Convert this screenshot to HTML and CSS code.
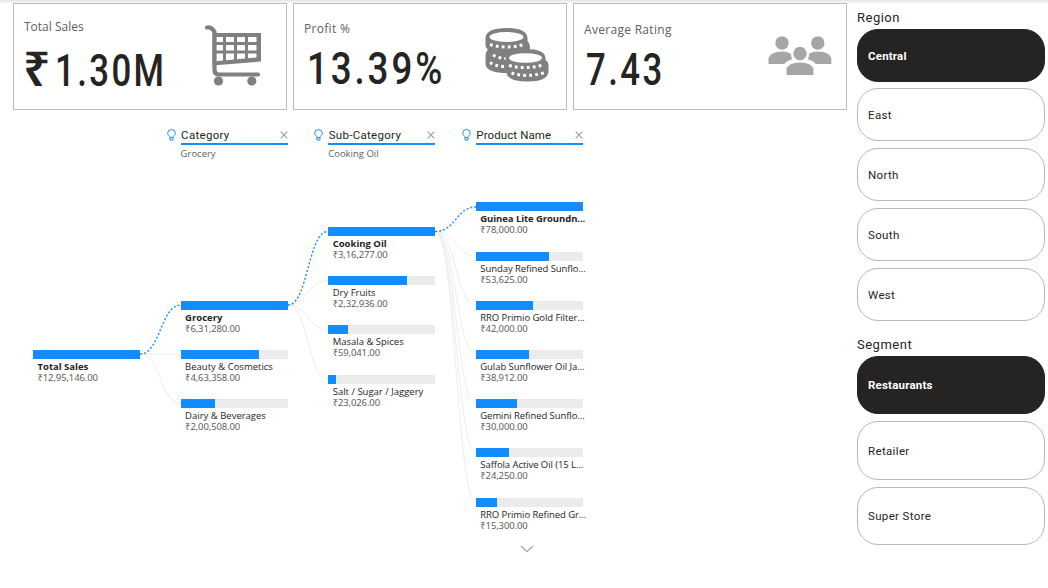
FILE: index.html
```html
<!DOCTYPE html>
<html lang="en">
<head>
<meta charset="utf-8">
<title>Sales Dashboard</title>
<link rel="stylesheet" href="styles.css">
</head>
<body>
<div class="page">
  <main class="main">
    <section class="kpis">
      <article class="kpi kpi-sales">
        <div class="kpi-text">
          <div class="kpi-label">Total Sales</div>
          <div class="kpi-value"><span class="rupee">₹</span><span class="num">1.30M</span></div>
        </div>
        <svg class="icon-cart" width="58" height="64" viewBox="0 0 58 64">
          <path d="M3 4.500Q8 4 10.500 9V47Q10.500 51.500 15 51.500H54" fill="none" stroke="#808080" stroke-width="4.200" stroke-linecap="round"/>
          <path fill="#808080" fill-rule="evenodd" d="M8.500 10H57V38.500L8.500 42.500ZM10 14V19H19V14ZM22 14V19H30V14ZM33 14V19H41V14ZM44 14V19H52.500V14ZM10 22V27.500H19V22ZM22 22V27.500H30V22ZM33 22V27.500H41V22ZM44 22V27.500H52.500V22ZM10 30.500V38.500L19 37.500V30.500ZM22 30.500V37.300L30 36.500V30.500ZM33 30.500V36.300L41 35.500V30.500ZM44 30.500V35.300L52.500 34.500V30.500Z"/>
          <circle cx="14.500" cy="58" r="4.600" fill="#808080"/><circle cx="47.800" cy="58" r="4.600" fill="#808080"/>
        </svg>
      </article>
      <article class="kpi kpi-profit">
        <div class="kpi-text">
          <div class="kpi-label">Profit %</div>
          <div class="kpi-value"><span class="num">13.39%</span></div>
        </div>
        <svg class="icon-coins" width="64" height="56" viewBox="0 0 64 56">
          <g fill="#808080">
            <path d="M.500 28Q1 22 7 21H40Q45 22 44 27V40Q36 46 22 46Q3 46 .500 38Z"/>
            <path d="M.500 11Q1 1 21.500 1Q42 1 42.500 11V14Q45.500 17 45 22Q36 28 20 28Q3 27 .500 19Z"/>
          </g>
          <ellipse cx="21.500" cy="10" rx="17" ry="5" fill="#fff"/>
          <path d="M5 17.500Q21 22.500 39 17.500M8 28Q14 31.500 22 31.500M5 35.500Q11 39.500 20 39.500" fill="none" stroke="#fff" stroke-width="3" stroke-dasharray="2.800 3.200"/>
          <path fill="#808080" d="M20.500 31Q21 22 40 22Q60 22 60.500 31V33Q64 35 63.500 40V45Q62 54.500 43 54.500Q23 54.500 21.500 46V42Q20.500 40 20.500 35Z"/>
          <ellipse cx="40.500" cy="31" rx="16.500" ry="4.800" fill="#fff"/>
          <path d="M24 38.500Q40 43 58 38M26.500 46Q42 51 60 45.500" fill="none" stroke="#fff" stroke-width="3" stroke-dasharray="2.800 3.200"/>
        </svg>
      </article>
      <article class="kpi kpi-rating">
        <div class="kpi-text">
          <div class="kpi-label">Average Rating</div>
          <div class="kpi-value"><span class="num">7.43</span></div>
        </div>
        <svg class="icon-people" width="64" height="40" viewBox="0 0 64 40">
          <g fill="#a6a6a6">
            <circle cx="14" cy="7" r="6.700"/><circle cx="49.800" cy="7" r="6.700"/>
            <path d="M.500 28V22Q3 15.500 14 15.500Q19 15.500 22.500 17.500Q24 23 24 23.500Q18 25 16.500 28Z"/>
            <path d="M63.300 28V22Q61 15.500 49.800 15.500Q45 15.500 41.500 17.500Q40 23 40 23.500Q46 25 47.500 28Z"/>
            <circle cx="32" cy="17.500" r="6.700"/>
            <path d="M18.500 39V32.500Q21 26.500 32 26.500Q43 26.500 45.400 32.500V39Z"/>
          </g>
        </svg>
      </article>
    </section>

    <section class="tree">
      <svg class="links" width="857" height="478" viewBox="0 110 857 478">
        <g class="link">
          <path d="M140 354H181M140 354C160.500 354 160.500 403.500 181 403.500"/>
          <path d="M288 305C308 305 308 280.500 328 280.500M288 305C308 305 308 329.500 328 329.500M288 305C308 305 308 379 328 379"/>
          <path d="M435 231.500C456 231.500 456 256 476 256M435 231.500C456 231.500 456 305 476 305M435 231.500C456 231.500 456 354 476 354M435 231.500C456 231.500 456 403.500 476 403.500M435 231.500C456 231.500 456 452.500 476 452.500M435 231.500C456 231.500 456 502 476 502"/>
        </g>
        <path class="link-active" d="M140 354C160.500 354 160.500 305 181 305M288 305C308 305 308 231.500 328 231.500M435 231.500C456 231.500 456 207 476 207"/>
      </svg>

      <div class="level level-root">
        <div class="node selected"><div class="bar"><i style="width:100%"></i></div><b>Total Sales</b><span>₹12,95,146.00</span></div>
      </div>

      <div class="level level-category">
        <header class="head">
          <svg class="bulb" width="9" height="12" viewBox="0 0 9 12"><path d="M3 8.500C3 6.800.700 6.500.700 4.200A3.800 3.700 0 0 1 8.300 4.200C8.300 6.500 6 6.800 6 8.500ZM3 8.500V11H6V8.500"/></svg>
          <h2>Category</h2>
          <svg class="close" width="8" height="8" viewBox="0 0 8 8"><path d="M.700.700L7.300 7.300M7.300.700L.700 7.300"/></svg>
          <p>Grocery</p>
        </header>
        <div class="nodes">
          <div class="node selected"><div class="bar"><i style="width:100%"></i></div><b>Grocery</b><span>₹6,31,280.00</span></div>
          <div class="node"><div class="bar"><i style="width:73.400%"></i></div><b>Beauty &amp; Cosmetics</b><span>₹4,63,358.00</span></div>
          <div class="node"><div class="bar"><i style="width:31.800%"></i></div><b>Dairy &amp; Beverages</b><span>₹2,00,508.00</span></div>
        </div>
      </div>

      <div class="level level-sub">
        <header class="head">
          <svg class="bulb" width="9" height="12" viewBox="0 0 9 12"><path d="M3 8.500C3 6.800.700 6.500.700 4.200A3.800 3.700 0 0 1 8.300 4.200C8.300 6.500 6 6.800 6 8.500ZM3 8.500V11H6V8.500"/></svg>
          <h2>Sub-Category</h2>
          <svg class="close" width="8" height="8" viewBox="0 0 8 8"><path d="M.700.700L7.300 7.300M7.300.700L.700 7.300"/></svg>
          <p>Cooking Oil</p>
        </header>
        <div class="nodes">
          <div class="node selected"><div class="bar"><i style="width:100%"></i></div><b>Cooking Oil</b><span>₹3,16,277.00</span></div>
          <div class="node"><div class="bar"><i style="width:73.600%"></i></div><b>Dry Fruits</b><span>₹2,32,936.00</span></div>
          <div class="node"><div class="bar"><i style="width:18.700%"></i></div><b>Masala &amp; Spices</b><span>₹59,041.00</span></div>
          <div class="node"><div class="bar"><i style="width:7.300%"></i></div><b>Salt / Sugar / Jaggery</b><span>₹23,026.00</span></div>
        </div>
      </div>

      <div class="level level-product">
        <header class="head">
          <svg class="bulb" width="9" height="12" viewBox="0 0 9 12"><path d="M3 8.500C3 6.800.700 6.500.700 4.200A3.800 3.700 0 0 1 8.300 4.200C8.300 6.500 6 6.800 6 8.500ZM3 8.500V11H6V8.500"/></svg>
          <h2>Product Name</h2>
          <svg class="close" width="8" height="8" viewBox="0 0 8 8"><path d="M.700.700L7.300 7.300M7.300.700L.700 7.300"/></svg>
          <p></p>
        </header>
        <div class="nodes">
          <div class="node selected"><div class="bar"><i style="width:100%"></i></div><b>Guinea Lite Groundn...</b><span>₹78,000.00</span></div>
          <div class="node"><div class="bar"><i style="width:68.700%"></i></div><b>Sunday Refined Sunflo...</b><span>₹53,625.00</span></div>
          <div class="node"><div class="bar"><i style="width:53.800%"></i></div><b>RRO Primio Gold Filter...</b><span>₹42,000.00</span></div>
          <div class="node"><div class="bar"><i style="width:49.900%"></i></div><b>Gulab Sunflower Oil Ja...</b><span>₹38,912.00</span></div>
          <div class="node"><div class="bar"><i style="width:38.500%"></i></div><b>Gemini Refined Sunflo...</b><span>₹30,000.00</span></div>
          <div class="node"><div class="bar"><i style="width:31.100%"></i></div><b>Saffola Active Oil (15 L...</b><span>₹24,250.00</span></div>
          <div class="node"><div class="bar"><i style="width:19.600%"></i></div><b>RRO Primio Refined Gr...</b><span>₹15,300.00</span></div>
        </div>
        <svg class="more" width="14" height="8" viewBox="0 0 14 8"><path d="M1 1L7 6.500L13 1"/></svg>
      </div>
    </section>
  </main>

  <aside class="filters">
    <section class="filter region">
      <h3>Region</h3>
      <button class="pill active">Central</button>
      <button class="pill">East</button>
      <button class="pill">North</button>
      <button class="pill">South</button>
      <button class="pill">West</button>
    </section>
    <section class="filter segment">
      <h3>Segment</h3>
      <button class="pill active">Restaurants</button>
      <button class="pill">Retailer</button>
      <button class="pill">Super Store</button>
    </section>
  </aside>
</div>
</body>
</html>
```
FILE: styles.css
```css
* { box-sizing: border-box; }
body {
  margin: 0;
  background: #fff;
  color: #252423;
  font-family: "Open Sans", "Noto Sans", sans-serif;
}
.page {
  display: flex;
  height: 588px;
  overflow: hidden;
  background: linear-gradient(#e3e3e3, #fff 4px);
}
.main { width: 857px; }

/* KPI cards */
.kpis { display: flex; gap: 6px; padding: 3px 0 0 13px; height: 110px; }
.kpi {
  display: flex;
  flex: none;
  justify-content: space-between;
  width: 274px;
  height: 107px;
  border: 1px solid #bdbdbd;
  background: #fff;
}
.kpi-text { width: 170px; padding: 14px 0 0 10px; }
.kpi-profit .kpi-text { padding-top: 16px; }
.kpi-rating .kpi-text { padding-top: 17px; }
.kpi-label { font-size: 12px; line-height: 18px; color: #605e5c; white-space: nowrap; }
.kpi-profit .kpi-label, .kpi-rating .kpi-label { letter-spacing: .300px; }
.kpi-value { display: flex; height: 50px; margin-top: 7px; align-items: baseline; line-height: 50px; }
.num {
  flex: none;
  font-family: Roboto, sans-serif;
  font-size: 43.500px;
  font-weight: 500;
  letter-spacing: 3px;
  transform: scaleX(.800);
  transform-origin: 0 50%;
}
.rupee { flex: none; width: 31.500px; margin-left: -1px; font: 600 48px/50px "Noto Sans", sans-serif; }
.kpi-profit .num { margin-left: 2.500px; letter-spacing: 3.400px; transform: scaleX(.845); }
.kpi-rating .num { margin-left: 2px; }
.icon-cart { margin: 19px 24px 0 0; }
.icon-coins { margin: 23px 17px 0 0; }
.icon-people { margin: 32px 14px 0 0; }

/* Decomposition tree */
.tree { position: relative; display: flex; height: 478px; padding-left: 33px; }
.links { position: absolute; left: 0; top: 0; }
.link path { fill: none; stroke: #ededed; }
.link-active { fill: none; stroke: #118dff; stroke-width: 1.400; stroke-dasharray: 2 2; }
.level { width: 107px; margin-right: 40.600px; flex: none; }
.head {
  display: grid;
  grid-template-columns: 14px 1fr 8px;
  grid-template-rows: 17px 18px;
  align-items: center;
  height: 93px;
  margin-left: -14px;
  padding-top: 16px;
}
.head h2 {
  margin: 0;
  padding-left: .500px;
  font: 400 11.500px/16px Roboto, sans-serif;
  letter-spacing: .300px;
  white-space: nowrap;
}
.head p {
  grid-column: 2 / 4;
  align-self: start;
  height: 18px;
  margin: 0;
  border-top: 2px solid #118dff;
  font-size: 9.500px;
  line-height: 17px;
  color: #605e5c;
}
.level-product h2 { letter-spacing: .100px; }
.bulb path { fill: none; stroke: #118dff; }
.close path { fill: none; stroke: #a19f9d; stroke-width: 1.200; }
.level-root { padding-top: 239.500px; }
.level-category .nodes { padding-top: 97.500px; }
.level-sub .nodes { padding-top: 24px; }
.level-product .head { height: 92.400px; }
.node { height: 49.200px; white-space: nowrap; }
.bar { height: 9px; background: #ebebeb; }
.bar i { display: block; height: 100%; background: #118dff; }
.node b, .node span { display: block; padding-left: 4.500px; font-size: 9.500px; }
.node b { padding-top: 1px; font-weight: 400; line-height: 13px; }
.node span {
  line-height: 10.500px;
  color: #605e5c;
  font-family: "Noto Sans", sans-serif;
  letter-spacing: -.130px;
}
.node.selected b { font-weight: 700; }
.level-product b { letter-spacing: -.070px; }
.more { display: block; margin: -2px 0 0 44px; }
.more path { fill: none; stroke: #b3b0ad; stroke-width: 1.600; }

/* Slicers */
.filters { width: 188px; font-family: Roboto, sans-serif; }
.filter { display: flex; flex-direction: column; }
.filter h3 { margin: 0; font-size: 13px; line-height: 16px; font-weight: 400; letter-spacing: .500px; }
.region { gap: 6.800px; padding-top: 10px; }
.region h3 { margin-bottom: -4.300px; }
.segment { gap: 7.100px; padding-top: 16.200px; }
.segment h3 { margin-bottom: -4.300px; }
.pill {
  height: 53px;
  padding: 1px 10px 0;
  border: 1px solid #b8b8b8;
  border-radius: 21px;
  background: #fff;
  color: #252423;
  font: 400 11.500px Roboto, sans-serif;
  letter-spacing: .350px;
  text-align: left;
}
.segment .pill { height: 58.500px; padding-top: 0; }
.pill.active { border-color: #252423; background: #252423; color: #fff; font-weight: 700; letter-spacing: .200px; }
```
